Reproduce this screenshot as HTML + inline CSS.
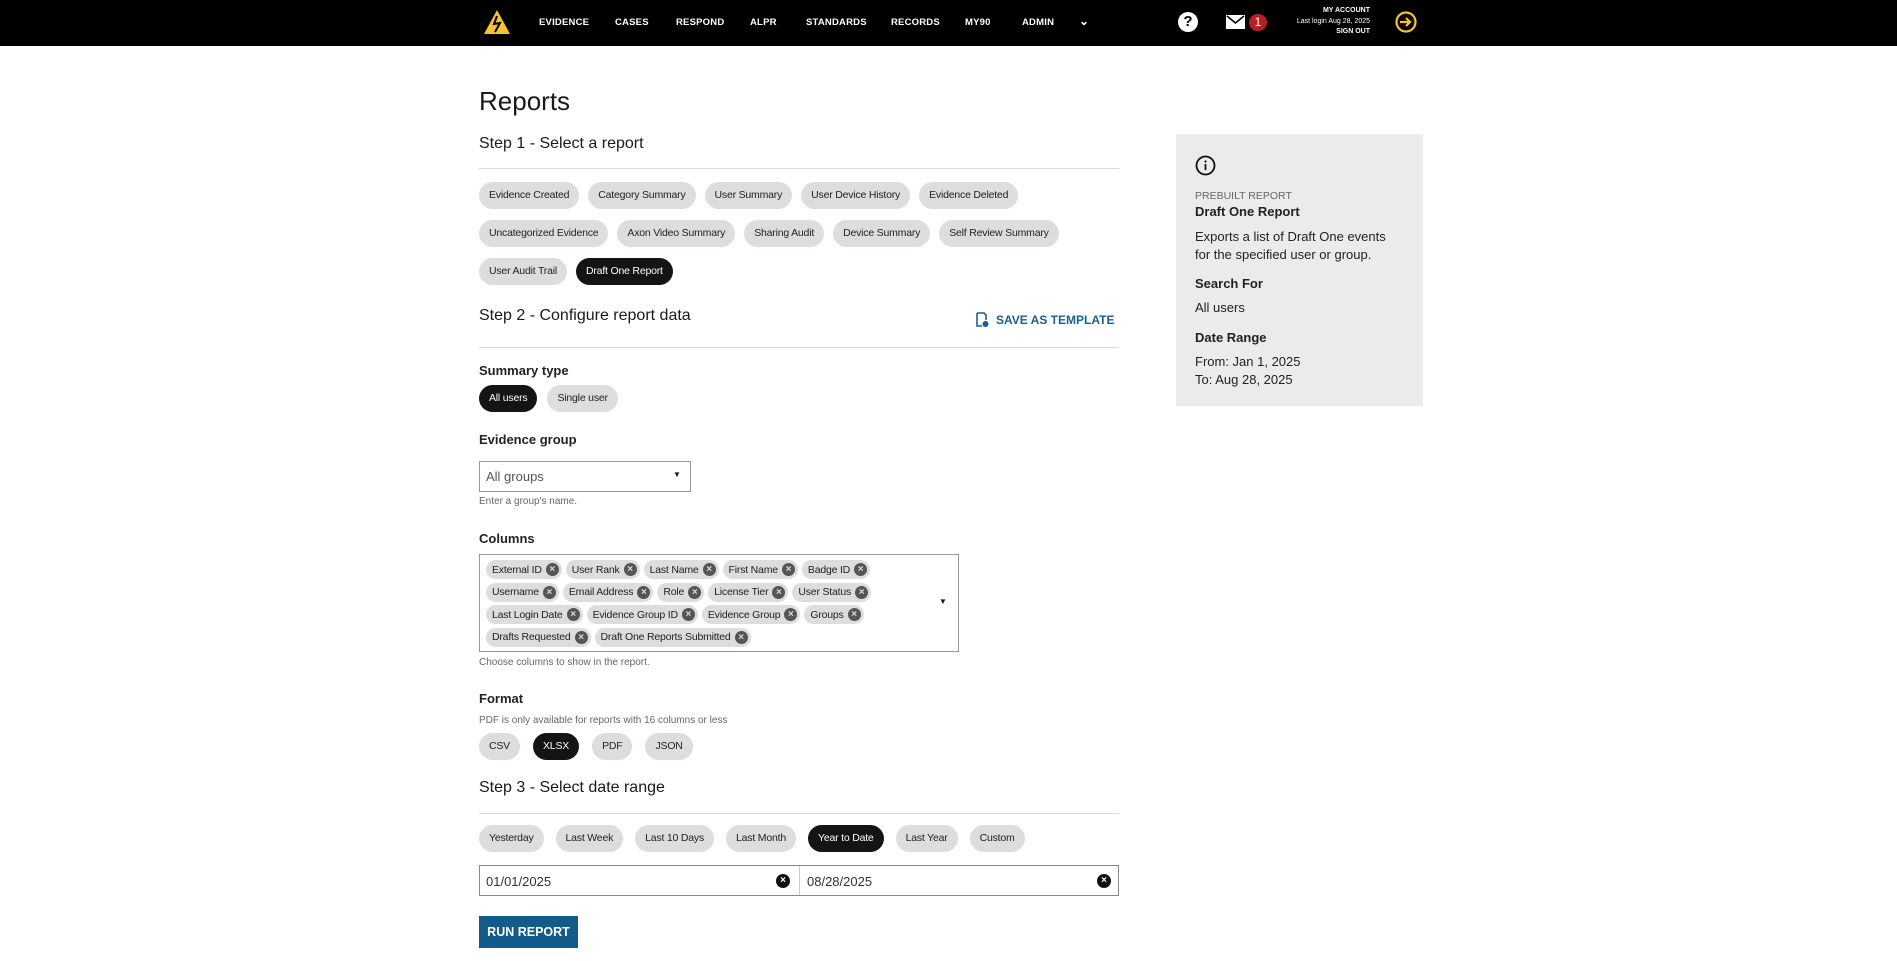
<!DOCTYPE html>
<html><head><meta charset="utf-8"><style>
*{box-sizing:border-box;margin:0;padding:0}
body{width:1897px;height:961px;background:#fff;font-family:"Liberation Sans",Arial,sans-serif;color:#1a1a1a;position:relative;overflow:hidden}
.hdr{position:absolute;left:0;top:0;width:1897px;height:46px;background:#000}
.nav{position:absolute;top:17px;color:#fff;font-size:9.5px;font-weight:bold;letter-spacing:.2px}
.a{position:absolute}
h1{position:absolute;left:479px;top:86px;font-size:26px;font-weight:normal}
.h2{position:absolute;left:479px;font-size:16px;font-weight:normal}
.hr{position:absolute;left:479px;width:640px;height:1px;background:#d8d8d8}
.lbl{position:absolute;left:479px;font-size:13px;font-weight:bold;color:#222}
.row{position:absolute;left:479px;display:flex;gap:9px}
.chip{height:27px;line-height:27px;padding:0 10px;border-radius:14px;background:#dedcdc;font-size:10.5px;letter-spacing:-.2px;color:#222;white-space:nowrap}
.chip.on{background:#141316;color:#fff}
.help{position:absolute;left:479px;font-size:10px;color:#666}
.box{position:absolute;border:1px solid #999;background:#fff}
.tag{display:inline-flex;align-items:center;height:19px;padding:0 3px 0 6px;border-radius:10px;background:#dedcdc;font-size:10.5px;letter-spacing:-.2px;color:#222;margin:0 4px 3.5px 0;white-space:nowrap}
.x{display:inline-block;width:13px;height:13px;border-radius:50%;background:#555;color:#dedcdc;font-size:10px;line-height:13px;text-align:center;margin-left:4px;font-weight:bold}
.side{position:absolute;left:1176px;top:134px;width:247px;height:272px;background:#ebebeb}
.side div{position:absolute;left:19px;font-size:13px;color:#222}
</style></head><body>
<div class="hdr">
<svg class="a" style="left:484px;top:10px" width="26" height="24" viewBox="0 0 26 24"><polygon points="13,0 26,24 0,24" fill="#f7c331"/><path d="M13 6 L10 14 L16 13 L11 22" stroke="#000" stroke-width="2" fill="none"/></svg>
<div class="nav" style="left:539px">EVIDENCE</div>
<div class="nav" style="left:615px">CASES</div>
<div class="nav" style="left:676px">RESPOND</div>
<div class="nav" style="left:750px">ALPR</div>
<div class="nav" style="left:806px">STANDARDS</div>
<div class="nav" style="left:891px">RECORDS</div>
<div class="nav" style="left:965px">MY90</div>
<div class="nav" style="left:1022px">ADMIN</div>
<div class="nav" style="left:1079px;top:14px;font-size:12px">&#8964;</div>
<div class="a" style="left:1178px;top:12px;width:20px;height:20px;border-radius:50%;background:#fff;color:#000;font-weight:bold;font-size:15px;text-align:center;line-height:20px">?</div>
<svg class="a" style="left:1226px;top:15px" width="19" height="14" viewBox="0 0 19 14"><rect width="19" height="14" fill="#fff"/><path d="M1 1 L9.5 8 L18 1" stroke="#000" stroke-width="1.6" fill="none"/></svg>
<div class="a" style="left:1249px;top:14px;width:18px;height:17px;border-radius:9px;background:#b52020;color:#fff;font-size:12px;text-align:center;line-height:17px">1</div>
<div class="a" style="left:1280px;top:6px;width:90px;text-align:right;color:#fff;font-size:7px;font-weight:bold;line-height:10.5px">MY ACCOUNT<br><span style="font-weight:normal">Last login Aug 28, 2025</span><br>SIGN OUT</div>
<svg class="a" style="left:1395px;top:11px" width="22" height="22" viewBox="0 0 22 22"><circle cx="11" cy="11" r="9.5" stroke="#f7c331" stroke-width="2.2" fill="none"/><path d="M5 11 H15 M11 7 L15 11 L11 15" stroke="#f7c331" stroke-width="2.2" fill="none"/></svg>
</div>

<h1>Reports</h1>
<div class="h2" style="top:135px">Step 1 - Select a report</div>
<div class="hr" style="top:168px"></div>
<div class="row" style="top:182px"><span class="chip">Evidence Created</span><span class="chip">Category Summary</span><span class="chip">User Summary</span><span class="chip">User Device History</span><span class="chip">Evidence Deleted</span></div>
<div class="row" style="top:220px"><span class="chip">Uncategorized Evidence</span><span class="chip">Axon Video Summary</span><span class="chip">Sharing Audit</span><span class="chip">Device Summary</span><span class="chip">Self Review Summary</span></div>
<div class="row" style="top:258px"><span class="chip">User Audit Trail</span><span class="chip on">Draft One Report</span></div>

<div class="h2" style="top:307px">Step 2 - Configure report data</div>
<svg class="a" style="left:975px;top:312px" width="14" height="16" viewBox="0 0 14 16"><path d="M2 1 H9 L11 3 V8 M2 1 V14 H7" stroke="#1a5f8f" stroke-width="1.6" fill="none"/><circle cx="10.5" cy="12" r="3" fill="#1a5f8f"/></svg>
<div class="a" style="left:996px;top:313px;color:#1a5f8f;font-size:12px;font-weight:bold">SAVE AS TEMPLATE</div>
<div class="hr" style="top:347px"></div>

<div class="lbl" style="top:363px">Summary type</div>
<div class="row" style="top:385px;gap:10px"><span class="chip on">All users</span><span class="chip">Single user</span></div>

<div class="lbl" style="top:432px">Evidence group</div>
<div class="box" style="left:479px;top:461px;width:212px;height:31px"><span class="a" style="left:6px;top:7px;font-size:13px;color:#555">All groups</span><span class="a" style="left:193px;top:8px;font-size:8px">&#9660;</span></div>
<div class="help" style="top:496px">Enter a group's name.</div>

<div class="lbl" style="top:531px">Columns</div>
<div class="box" style="left:479px;top:554px;width:480px;height:98px;padding:5px 0 0 6px">
<div style="width:430px;line-height:0"><span class="tag">External ID<span class="x">×</span></span><span class="tag">User Rank<span class="x">×</span></span><span class="tag">Last Name<span class="x">×</span></span><span class="tag">First Name<span class="x">×</span></span><span class="tag">Badge ID<span class="x">×</span></span><span class="tag">Username<span class="x">×</span></span><span class="tag">Email Address<span class="x">×</span></span><span class="tag">Role<span class="x">×</span></span><span class="tag">License Tier<span class="x">×</span></span><span class="tag">User Status<span class="x">×</span></span><span class="tag">Last Login Date<span class="x">×</span></span><span class="tag">Evidence Group ID<span class="x">×</span></span><span class="tag">Evidence Group<span class="x">×</span></span><span class="tag">Groups<span class="x">×</span></span><span class="tag">Drafts Requested<span class="x">×</span></span><span class="tag">Draft One Reports Submitted<span class="x">×</span></span></div>
<span class="a" style="left:459px;top:42px;font-size:8px">&#9660;</span></div>
<div class="help" style="top:657px">Choose columns to show in the report.</div>

<div class="lbl" style="top:691px">Format</div>
<div class="help" style="top:715px">PDF is only available for reports with 16 columns or less</div>
<div class="row" style="top:733px;gap:13px"><span class="chip">CSV</span><span class="chip on">XLSX</span><span class="chip">PDF</span><span class="chip">JSON</span></div>

<div class="h2" style="top:779px">Step 3 - Select date range</div>
<div class="hr" style="top:813px"></div>
<div class="row" style="top:825px;gap:12px"><span class="chip">Yesterday</span><span class="chip">Last Week</span><span class="chip">Last 10 Days</span><span class="chip">Last Month</span><span class="chip on">Year to Date</span><span class="chip">Last Year</span><span class="chip">Custom</span></div>
<div class="box" style="left:479px;top:865px;width:640px;height:31px;border-color:#888">
<span class="a" style="left:6px;top:8px;font-size:13px;color:#333">01/01/2025</span>
<span class="a" style="left:296px;top:8px;width:14px;height:14px;border-radius:50%;background:#111;color:#fff;font-size:10px;text-align:center;line-height:14px;font-weight:bold">×</span>
<span class="a" style="left:319px;top:0;width:1px;height:29px;background:#ccc"></span>
<span class="a" style="left:327px;top:8px;font-size:13px;color:#333">08/28/2025</span>
<span class="a" style="left:617px;top:8px;width:14px;height:14px;border-radius:50%;background:#111;color:#fff;font-size:10px;text-align:center;line-height:14px;font-weight:bold">×</span>
</div>
<div class="a" style="left:479px;top:916px;width:99px;height:32px;background:#135b8a;color:#fff;font-size:12.5px;font-weight:bold;text-align:center;line-height:32px">RUN REPORT</div>

<div class="side">
<svg class="a" style="left:19px;top:21px" width="21" height="21" viewBox="0 0 21 21"><circle cx="10.5" cy="10.5" r="9" stroke="#111" stroke-width="1.8" fill="none"/><rect x="9.6" y="9" width="1.8" height="6" fill="#111"/><circle cx="10.5" cy="6.5" r="1.1" fill="#111"/></svg>
<div style="top:56px;font-size:10.5px;color:#666">PREBUILT REPORT</div>
<div style="top:70px;font-weight:bold">Draft One Report</div>
<div style="top:94px;line-height:18px">Exports a list of Draft One events<br>for the specified user or group.</div>
<div style="top:142px;font-weight:bold">Search For</div>
<div style="top:166px">All users</div>
<div style="top:196px;font-weight:bold">Date Range</div>
<div style="top:219px;line-height:18px">From: Jan 1, 2025<br>To: Aug 28, 2025</div>
</div>
</body></html>
